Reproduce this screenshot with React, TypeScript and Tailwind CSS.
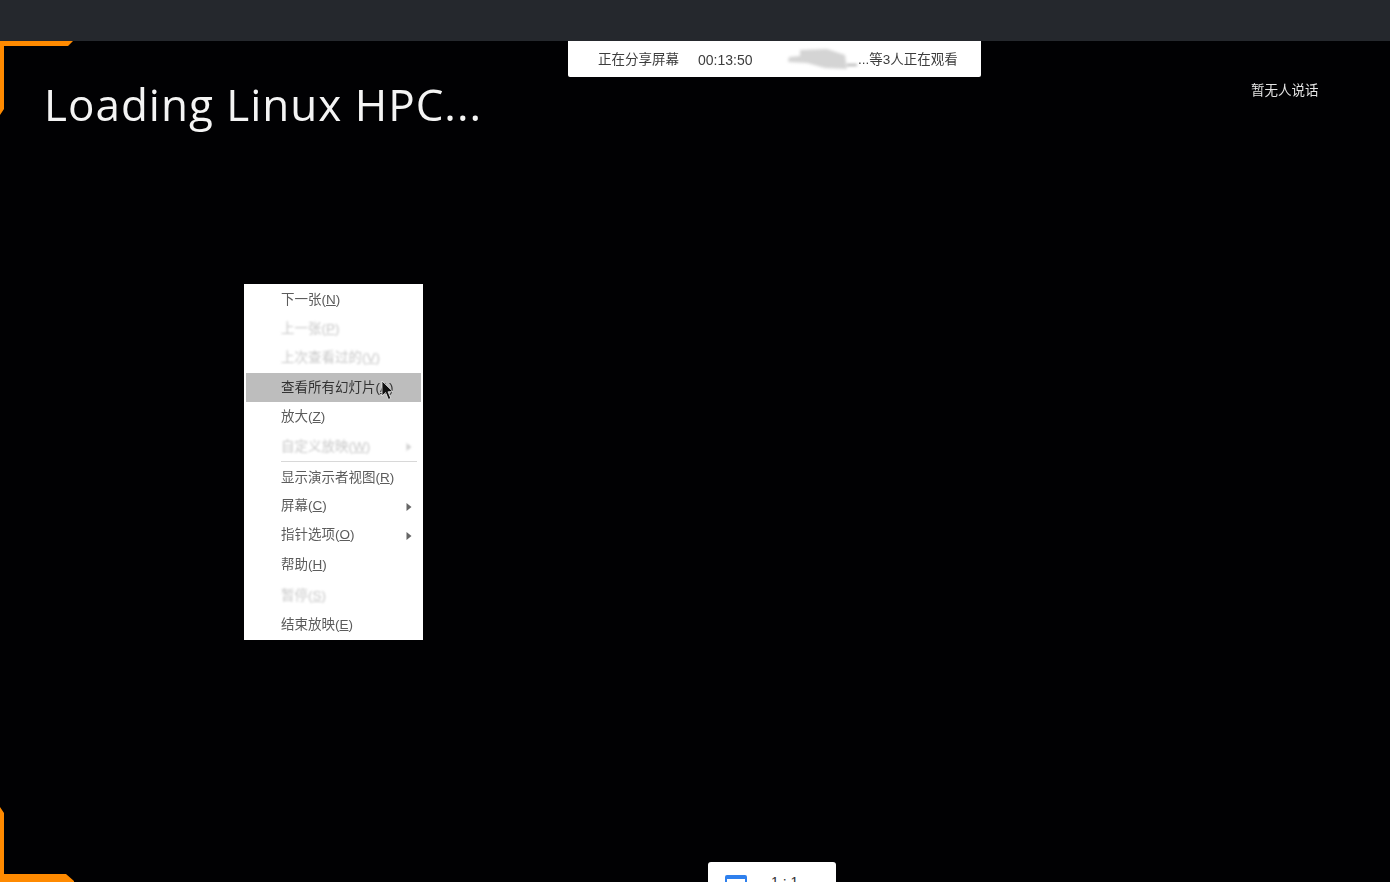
const CJK = "font-['Liberation_Sans','Noto_Sans_CJK_SC',sans-serif]";

type Row = {
  label: string;
  key: string;
  className: string; // height + top spacing of the row
  disabled?: boolean;
  active?: boolean;
  submenu?: boolean;
};

const rows: Row[] = [
  { label: '下一张', key: 'N', className: 'h-[29px]' },
  { label: '上一张', key: 'P', className: 'h-[29px]', disabled: true },
  { label: '上次查看过的', key: 'V', className: 'h-[29px]', disabled: true },
  { label: '查看所有幻灯片', key: 'A', className: 'mt-px h-[29px]', active: true },
  { label: '放大', key: 'Z', className: 'h-[29px]' },
  { label: '自定义放映', key: 'W', className: 'h-[30px]', disabled: true, submenu: true },
];

const rows2: Row[] = [
  { label: '显示演示者视图', key: 'R', className: 'h-[28px]' },
  { label: '屏幕', key: 'C', className: 'h-[29px]', submenu: true },
  { label: '指针选项', key: 'O', className: 'h-[29px]', submenu: true },
  { label: '帮助', key: 'H', className: 'h-[31px]' },
  { label: '暂停', key: 'S', className: 'mt-px h-[29px]', disabled: true },
  { label: '结束放映', key: 'E', className: 'h-[29px]' },
];

function MenuRow({ row }: { row: Row }) {
  return (
    <div
      className={`relative flex items-center pl-[37px] pr-[11px] pt-[2px] text-[13.5px] ${row.className} ${
        row.active ? 'mx-[2px] !pl-[35px] bg-[#bdbdbd] text-[#333]' : ''
      } ${row.disabled ? 'text-[#c8c8c8] blur-[0.9px]' : 'text-[#5c5c5c] blur-[0.5px]'}`}
    >
      <span className="flex-1 whitespace-nowrap">
        {row.label}(<span className="underline">{row.key}</span>)
      </span>
      {row.submenu && (
        <svg width="6" height="8" viewBox="0 0 6 8" className={row.disabled ? 'opacity-30' : ''}>
          <path d="M0.5 0 L5.5 4 L0.5 8 Z" fill="#666" />
        </svg>
      )}
    </div>
  );
}

function ContextMenu() {
  return (
    <div className="absolute left-[244px] top-[243px] h-[356px] w-[179px] bg-white pt-px">
      {rows.map((r) => (
        <MenuRow key={r.key} row={r} />
      ))}
      <div className="ml-[37px] mr-[6px] h-px bg-[#d8d8d8]" />
      <div className="mt-px">
        {rows2.map((r) => (
          <MenuRow key={r.key} row={r} />
        ))}
      </div>
      {/* mouse cursor */}
      <svg width="13" height="21" viewBox="0 0 13 21" className="absolute left-[137px] top-[96px]">
        <path d="M1 1 L1 16 L4.6 12.6 L7.4 19.4 L9.8 18.4 L7 11.8 L11.8 11.6 Z" fill="#111" stroke="#eee" strokeWidth="0.8" />
      </svg>
    </div>
  );
}

function ShareBar() {
  return (
    <div className="absolute left-[568px] top-0 flex h-9 w-[413px] items-center rounded-b-[2px] bg-white pl-[30px] pt-[2px] text-[13.5px] text-[#3d3d3d] blur-[0.5px]">
      <span className="w-[100px] whitespace-nowrap">正在分享屏幕</span>
      <span className="w-[89px] whitespace-nowrap text-[14px]">00:13:50</span>
      <svg width="71" height="24" viewBox="0 0 71 24" className="shrink-0 blur-[1.5px]">
        <path d="M13 2 L40 1 L58 7 L60 21 L38 20 L20 15 L1 14 L2 9 L13 8 Z" fill="#d4d4d4" />
        <path d="M60 17 H70" stroke="#555" strokeWidth="1" />
      </svg>
      <span className="whitespace-nowrap">...等3人正在观看</span>
    </div>
  );
}

function CornerFrames() {
  return (
    <>
      <svg width="74" height="75" viewBox="0 0 74 75" className="absolute left-0 top-0">
        <path d="M0 0 H73 L68 5 H4 V68 L0 74 Z" fill="#ff8a00" />
      </svg>
      <svg width="74" height="75" viewBox="0 0 74 75" className="absolute bottom-0 left-0">
        <path d="M0 0 L4 6 V67 H66 L74 74 V75 H0 Z" fill="#ff8a00" />
      </svg>
    </>
  );
}

function ZoomBadge() {
  return (
    <div className="absolute bottom-0 left-[708px] flex h-5 w-[128px] items-start overflow-hidden rounded-t-[3px] bg-white pl-[17px] pt-[13px]">
      <div className="h-5 w-[22px] shrink-0 rounded-[2px] border-[2px] border-t-[4px] border-[#2f80ed]" />
      <span className="ml-[24px] -mt-[3px] whitespace-nowrap text-[14px] text-[#333]">1 : 1</span>
    </div>
  );
}

export default function App() {
  return (
    <div className={`flex h-[882px] w-[1390px] flex-col overflow-hidden bg-[#010103] ${CJK}`}>
      <div className="h-[41px] shrink-0 bg-[#25282d]" />
      <div className="relative flex-1">
        <CornerFrames />
        <div className="pl-[44px] pt-[33px] font-['Open_Sans',sans-serif] text-[44px] leading-[60px] tracking-[1px] text-[#f4f4f4] blur-[0.5px]">
          Loading Linux HPC...
        </div>
        <ShareBar />
        <div className="absolute left-[1251px] top-[40px] text-[13.5px] text-[#e4e4e4] blur-[0.4px]">暂无人说话</div>
        <ContextMenu />
        <ZoomBadge />
      </div>
    </div>
  );
}
